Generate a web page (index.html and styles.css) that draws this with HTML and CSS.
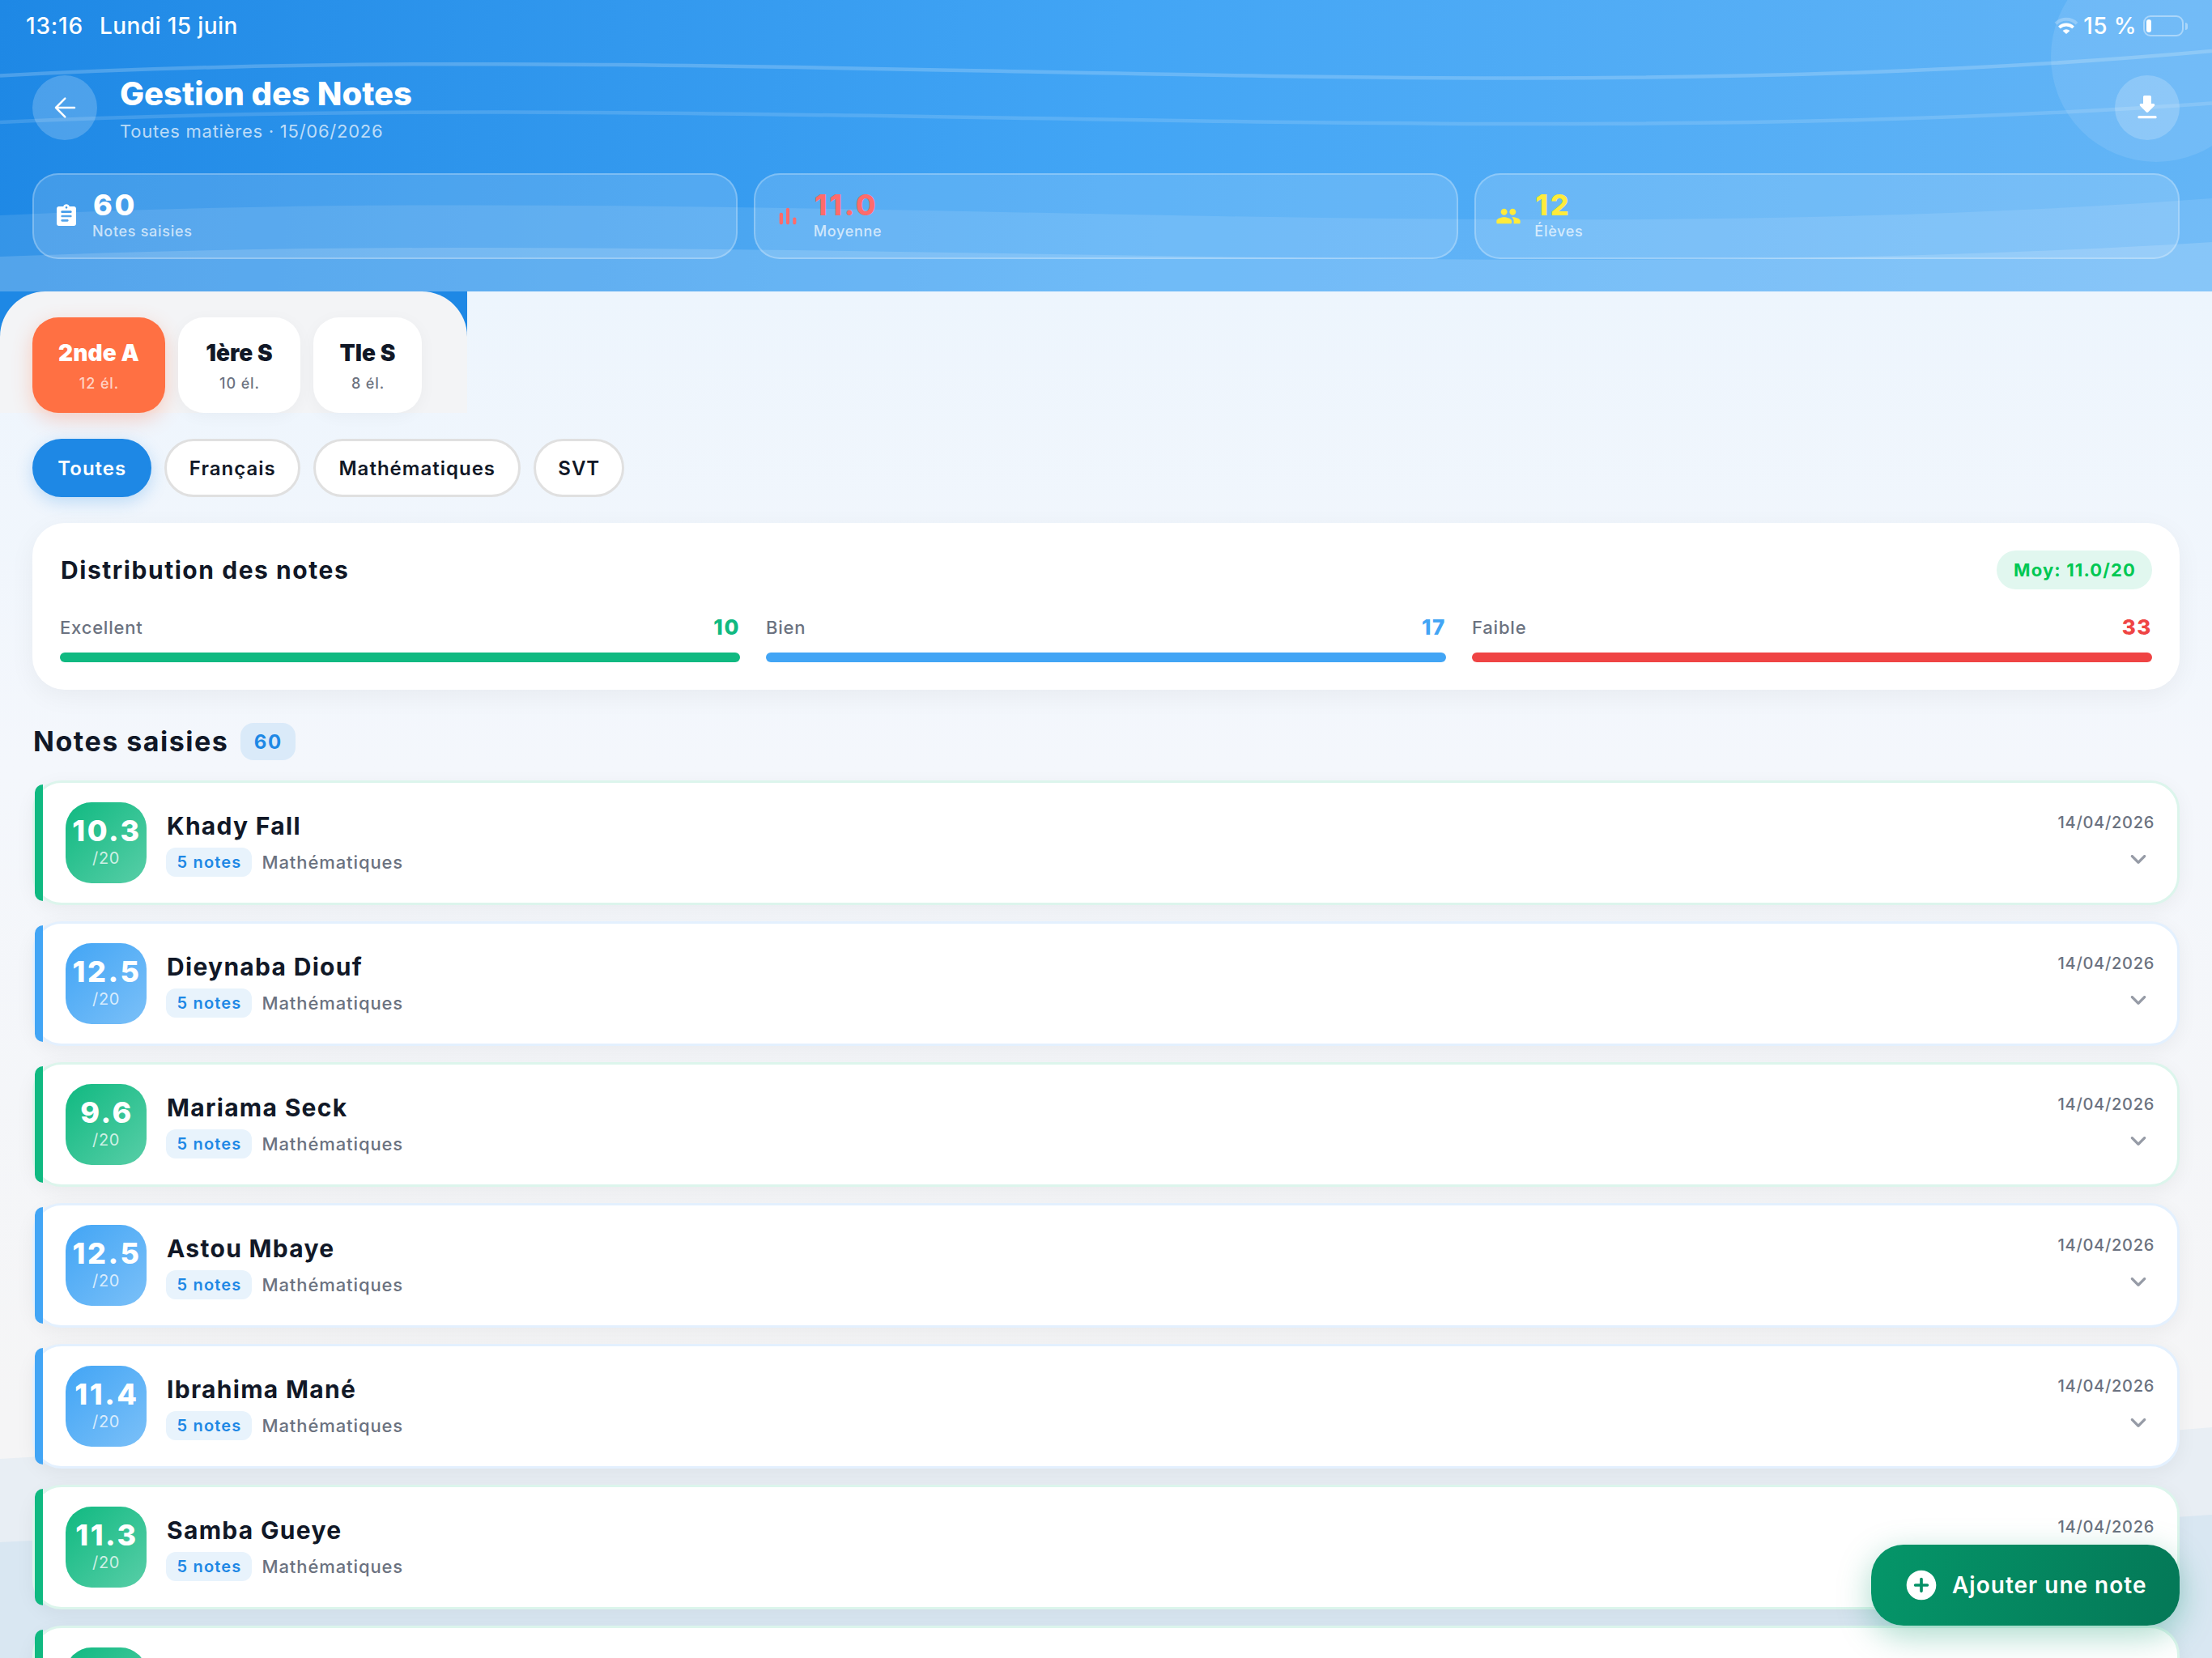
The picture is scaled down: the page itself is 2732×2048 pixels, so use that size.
FILE: index.html
```html
<!DOCTYPE html>
<html lang="fr">
<head>
    <meta charset="UTF-8">
    <meta name="viewport" content="width=device-width, initial-scale=1.0">
    <title>Gestion des Notes</title>
    <link rel="stylesheet" href="styles.css">
</head>
<body>
    <svg class="page-waves" viewBox="0 0 2732 2048">
        <path d="M0 1802 C910 1745 1822 1840 2732 1763 V2048 H0 Z" fill="#1e88e5" fill-opacity="0.06"/>
        <path d="M0 1905 C910 1855 1822 1935 2732 1871 V2048 H0 Z" fill="#1e88e5" fill-opacity="0.07"/>
    </svg>

    <header class="header">
        <svg class="header-waves" viewBox="0 0 2732 360">
            <path d="M0 266 C910 222 1822 313 2732 245 V360 H0 Z" fill="#fff" fill-opacity="0.1"/>
            <path d="M0 317 C910 279 1822 356 2732 299 V360 H0 Z" fill="#fff" fill-opacity="0.15"/>
            <path d="M0 93.5 C910 44 1822 145 2732 63" fill="none" stroke="#fff" stroke-opacity="0.2" stroke-width="4.5"/>
            <path d="M0 151 C910 109 1822 192 2732 127.5" fill="none" stroke="#fff" stroke-opacity="0.14" stroke-width="4.5"/>
            <circle cx="2663" cy="70" r="130" fill="#fff" fill-opacity="0.1"/>
        </svg>

        <div class="status-bar">
            <div class="status-left">
                <span class="time">13:16</span>
                <span>Lundi 15 juin</span>
            </div>
            <div class="status-right">
                <svg class="wifi" viewBox="0 0 30 22" fill="none">
                    <path d="M2 8.2 A18.5 18.5 0 0 1 28 8.2" stroke="#fff" stroke-opacity="0.25" stroke-width="4"/>
                    <path d="M6.4 13 A12.3 12.3 0 0 1 23.6 13" stroke="#fff" stroke-width="3.8"/>
                    <path d="M15 21 L10.6 17 A6.2 6.2 0 0 1 19.4 17 Z" fill="#fff"/>
                </svg>
                <span class="percent">15 %</span>
                <div class="battery"><div class="battery-level"></div></div>
                <div class="battery-cap"></div>
            </div>
        </div>

        <div class="title-row">
            <div class="round-btn">
                <svg class="icon-40" viewBox="0 0 40 40" fill="none" stroke="#fff" stroke-width="2.5" stroke-linecap="round" stroke-linejoin="round"><path d="M32 20 H9 M20.3 8.6 L9 20 L20.3 31.4"/></svg>
            </div>
            <div class="title-text">
                <h1>Gestion des Notes</h1>
                <p>Toutes matières · 15/06/2026</p>
            </div>
            <div class="round-btn">
                <svg class="icon-40" viewBox="0 0 24 24" fill="#fff"><path d="M16.59 9H15V4c0-.55-.45-1-1-1h-4c-.55 0-1 .45-1 1v5H7.41c-.89 0-1.34 1.08-.71 1.71l4.59 4.59c.39.39 1.02.39 1.41 0l4.59-4.59c.63-.63.19-1.71-.7-1.71zM5 19c0 .55.45 1 1 1h12c.55 0 1-.45 1-1s-.45-1-1-1H6c-.55 0-1 .45-1 1z"/></svg>
            </div>
        </div>

        <div class="stats">
            <div class="stat">
                <svg class="icon-32" viewBox="0 0 24 24" fill="#fff"><path d="M19 3h-4.18C14.4 1.84 13.3 1 12 1s-2.4.84-2.82 2H5c-1.1 0-2 .9-2 2v14c0 1.1.9 2 2 2h14c1.1 0 2-.9 2-2V5c0-1.1-.9-2-2-2zm-7 0c.55 0 1 .45 1 1s-.45 1-1 1-1-.45-1-1 .45-1 1-1zm1 14H8c-.55 0-1-.45-1-1s.45-1 1-1h5c.55 0 1 .45 1 1s-.45 1-1 1zm3-4H8c-.55 0-1-.45-1-1s.45-1 1-1h8c.55 0 1 .45 1 1s-.45 1-1 1zm0-4H8c-.55 0-1-.45-1-1s.45-1 1-1h8c.55 0 1 .45 1 1s-.45 1-1 1z"/></svg>
                <div>
                    <div class="stat-value">60</div>
                    <div class="stat-label">Notes saisies</div>
                </div>
            </div>
            <div class="stat stat-red">
                <svg class="icon-32" viewBox="1.2 1.2 21.6 21.6" fill="#ff6b6b"><path d="M6.4 9.2h.2c.77 0 1.4.63 1.4 1.4v7c0 .77-.63 1.4-1.4 1.4h-.2c-.77 0-1.4-.63-1.4-1.4v-7c0-.77.63-1.4 1.4-1.4zM12 5c.77 0 1.4.63 1.4 1.4v11.2c0 .77-.63 1.4-1.4 1.4-.77 0-1.4-.63-1.4-1.4V6.4c0-.77.63-1.4 1.4-1.4zm5.6 8c.77 0 1.4.63 1.4 1.4v3.2c0 .77-.63 1.4-1.4 1.4-.77 0-1.4-.63-1.4-1.4v-3.2c0-.77.63-1.4 1.4-1.4z"/></svg>
                <div>
                    <div class="stat-value">11.0</div>
                    <div class="stat-label">Moyenne</div>
                </div>
            </div>
            <div class="stat stat-yellow">
                <svg class="icon-32" viewBox="0 0 24 24" fill="#ffeb3b"><path d="M16 11c1.66 0 2.99-1.34 2.99-3S17.66 5 16 5c-1.66 0-3 1.34-3 3s1.34 3 3 3zm-8 0c1.66 0 2.99-1.34 2.99-3S9.66 5 8 5C6.34 5 5 6.34 5 8s1.34 3 3 3zm0 2c-2.33 0-7 1.17-7 3.5V18c0 .55.45 1 1 1h12c.55 0 1-.45 1-1v-1.5c0-2.33-4.67-3.5-7-3.5zm8 0c-.29 0-.62.02-.97.05.02.01.03.03.04.04 1.14.83 1.93 1.94 1.93 3.41V18c0 .35-.07.69-.18 1H22c.55 0 1-.45 1-1v-1.5c0-2.33-4.67-3.5-7-3.5z"/></svg>
                <div>
                    <div class="stat-value">12</div>
                    <div class="stat-label">Élèves</div>
                </div>
            </div>
        </div>
    </header>

    <div class="classes-wrap">
        <div class="classes">
            <div class="class-tile active"><b>2nde A</b><span>12 él.</span></div>
            <div class="class-tile"><b>1ère S</b><span>10 él.</span></div>
            <div class="class-tile"><b>Tle S</b><span>8 él.</span></div>
        </div>
    </div>

    <main>
        <div class="subjects">
            <div class="subject active">Toutes</div>
            <div class="subject">Français</div>
            <div class="subject">Mathématiques</div>
            <div class="subject">SVT</div>
        </div>

        <section class="distribution">
            <div class="distribution-head">
                <h2>Distribution des notes</h2>
                <span class="average">Moy: 11.0/20</span>
            </div>
            <div class="levels">
                <div class="level excellent">
                    <div class="level-text"><span>Excellent</span><b>10</b></div>
                    <div class="bar"></div>
                </div>
                <div class="level good">
                    <div class="level-text"><span>Bien</span><b>17</b></div>
                    <div class="bar"></div>
                </div>
                <div class="level weak">
                    <div class="level-text"><span>Faible</span><b>33</b></div>
                    <div class="bar"></div>
                </div>
            </div>
        </section>

        <div class="list-head">
            <h2>Notes saisies</h2>
            <span class="count">60</span>
        </div>

        <div class="list" id="list"></div>
    </main>

    <div class="add-btn">
        <svg class="icon-44" viewBox="0 0 24 24" fill="#fff"><path d="M12 2C6.48 2 2 6.48 2 12s4.48 10 10 10 10-4.48 10-10S17.52 2 12 2zm4 11h-3v3c0 .55-.45 1-1 1s-1-.45-1-1v-3H8c-.55 0-1-.45-1-1s.45-1 1-1h3V8c0-.55.45-1 1-1s1 .45 1 1v3h3c.55 0 1 .45 1 1s-.45 1-1 1z"/></svg>
        <span>Ajouter une note</span>
    </div>

    <script>
        const students = [
            { name: 'Khady Fall', score: '10.3', color: 'green' },
            { name: 'Dieynaba Diouf', score: '12.5', color: 'blue' },
            { name: 'Mariama Seck', score: '9.6', color: 'green' },
            { name: 'Astou Mbaye', score: '12.5', color: 'blue' },
            { name: 'Ibrahima Mané', score: '11.4', color: 'blue' },
            { name: 'Samba Gueye', score: '11.3', color: 'green' }
        ];

        const list = document.getElementById('list');
        students.forEach(function(s) {
            list.innerHTML += `
                <div class="card ${s.color}">
                    <div class="score"><b>${s.score}</b><span>/20</span></div>
                    <div class="info">
                        <div class="name">${s.name}</div>
                        <div class="meta"><span class="notes">5 notes</span><span>Mathématiques</span></div>
                    </div>
                    <div class="right">
                        <span class="date">14/04/2026</span>
                        <svg class="icon-40" viewBox="0 0 24 24" fill="#969ba6"><path d="M15.88 9.29L12 13.17 8.12 9.29c-.39-.39-1.02-.39-1.41 0-.39.39-.39 1.02 0 1.41l4.59 4.59c.39.39 1.02.39 1.41 0l4.59-4.59c.39-.39.39-1.02 0-1.41-.39-.38-1.03-.39-1.42 0z"/></svg>
                    </div>
                </div>`;
        });
        // next card, only its top edge is on screen
        list.innerHTML += '<div class="card green"><div class="score"></div></div>';
    </script>
</body>
</html>
```
FILE: styles.css
```css
* {
    box-sizing: border-box;
    margin: 0;
    padding: 0;
}
body {
    font-family: Inter, "Liberation Sans", sans-serif;
    position: relative;
    width: 2732px;
    height: 2048px;
    overflow: hidden;
    color: #111827;
    background: linear-gradient(180deg, #edf5fd 360px, #f4f7fc 950px, #f5f5f6 1750px);
}
svg {
    display: block;
    flex-shrink: 0;
}
.page-waves {
    position: absolute;
    top: 0;
    left: 0;
    width: 2732px;
    height: 2048px;
    z-index: -1;
}
.icon-32 {
    width: 32px;
    height: 32px;
}
.icon-40 {
    width: 40px;
    height: 40px;
}
.icon-44 {
    width: 44px;
    height: 44px;
}

/* header */
.header {
    position: relative;
    z-index: 0;
    height: 360px;
    padding: 0 40px;
    color: white;
    background: linear-gradient(97.5deg, #1e88e5, #42a5f5 50%, #64b5f6);
    overflow: hidden;
}
.header-waves {
    position: absolute;
    top: 0;
    left: 0;
    width: 2732px;
    height: 360px;
    z-index: -1;
}
.status-bar {
    display: flex;
    justify-content: space-between;
    align-items: center;
    height: 64px;
    margin: 0 -10px 0 -8px;
    font-size: 28px;
    font-weight: 450;
    letter-spacing: 0.4px;
}
.status-left, .status-right {
    display: flex;
    align-items: center;
}
.time {
    width: 91px;
    letter-spacing: 0.8px;
}
.wifi {
    width: 30px;
    height: 22px;
}
.percent {
    margin: 0 8px 0 6px;
    letter-spacing: 0.4px;
}
.battery {
    width: 50px;
    height: 26px;
    padding: 3px 2px;
    border: 2px solid rgba(255, 255, 255, 0.4);
    border-radius: 9px;
}
.battery-level {
    width: 6px;
    height: 16px;
    border-radius: 3px;
    background: white;
}
.battery-cap {
    width: 3px;
    height: 9px;
    margin-left: 2px;
    border-radius: 0 3px 3px 0;
    background: rgba(255, 255, 255, 0.4);
}
.title-row {
    display: flex;
    align-items: center;
    height: 80px;
    margin-top: 29px;
}
.round-btn {
    display: flex;
    justify-content: center;
    align-items: center;
    width: 80px;
    height: 80px;
    border-radius: 50%;
    background: rgba(255, 255, 255, 0.2);
}
.title-text {
    flex: 1;
    padding: 1px 0 0 28px;
}
.title-text h1 {
    font-size: 40px;
    line-height: 46px;
    font-weight: 800;
}
.title-text p {
    margin-top: 10px;
    font-size: 22px;
    line-height: 26px;
    letter-spacing: 0.75px;
    color: rgba(255, 255, 255, 0.7);
}
.stats {
    display: flex;
    gap: 20px;
    margin-top: 41px;
}
.stat {
    flex: 1;
    display: flex;
    align-items: center;
    gap: 16px;
    height: 106px;
    padding: 0 24px;
    border: 2px solid rgba(255, 255, 255, 0.25);
    border-radius: 32px;
    background: rgba(255, 255, 255, 0.15);
}
.stat-value {
    padding-left: 1px;
    font-size: 36px;
    line-height: 36px;
    font-weight: 800;
    letter-spacing: 2.6px;
}
.stat-label {
    margin: 4px 0 3px;
    font-size: 18px;
    line-height: 22px;
    font-weight: 500;
    letter-spacing: 0.7px;
    color: rgba(255, 255, 255, 0.7);
}
.stat-red .stat-value {
    color: #ff6b6b;
}
.stat-yellow .stat-value {
    color: #ffeb3b;
}

/* classes */
.classes-wrap {
    width: 577px;
    background: #1e88e5;
}
.classes {
    display: flex;
    gap: 16px;
    padding: 32px 40px 0;
    border-radius: 56px 56px 0 0;
    background: #f3f4f6;
}
.class-tile {
    display: flex;
    flex-direction: column;
    align-items: center;
    gap: 9px;
    width: 151px;
    height: 118px;
    padding-top: 27px;
    border-radius: 32px;
    background: white;
    box-shadow: 0 4px 20px rgba(0, 0, 0, 0.04);
}
.class-tile:last-child {
    width: 134px;
}
.class-tile b {
    font-size: 28px;
    line-height: 34px;
    font-weight: 900;
    letter-spacing: 0.1px;
}
.class-tile span {
    font-size: 18px;
    line-height: 24px;
    font-weight: 500;
    letter-spacing: 0.9px;
    margin-right: -1px;
    color: #6b7280;
}
.class-tile.active {
    width: 164px;
    color: white;
    background: #ff7043;
    box-shadow: 0 8px 24px rgba(255, 112, 67, 0.3);
}
.class-tile.active span {
    color: rgba(255, 255, 255, 0.7);
}

/* content */
main {
    padding: 32px 40px 0;
}
.subjects {
    display: flex;
    gap: 16px;
}
.subject {
    width: 168.5px;
    height: 72px;
    padding: 1px 0 0 1px;
    border: 3px solid #e0e0e0;
    border-radius: 40px;
    background: white;
    font-size: 24px;
    line-height: 66px;
    font-weight: 600;
    letter-spacing: 1px;
    text-align: center;
}
.subject:nth-child(3) {
    width: 255.5px;
}
.subject:nth-child(4) {
    width: 112.5px;
}
.subject.active {
    width: 146.5px;
    color: white;
    background: #1e88e5;
    border-color: #1e88e5;
    box-shadow: 0 6px 20px rgba(30, 136, 229, 0.25);
}
.distribution {
    height: 206px;
    margin-top: 32px;
    padding: 34px;
    border-radius: 40px;
    background: white;
    box-shadow: 0 8px 32px rgba(0, 0, 0, 0.05);
}
.distribution-head {
    display: flex;
    justify-content: space-between;
    align-items: center;
    height: 48px;
}
.distribution-head h2 {
    padding-left: 1px;
    font-size: 30px;
    font-weight: 700;
    letter-spacing: 1.55px;
}
.average {
    height: 48px;
    padding: 0 20px 0 21px;
    border-radius: 24px;
    background: #e1f7ef;
    color: #00c853;
    font-size: 22px;
    line-height: 48px;
    font-weight: 700;
    letter-spacing: 1.15px;
}
.levels {
    display: flex;
    gap: 32px;
    margin-top: 32px;
}
.level {
    flex: 1;
}
.level-text {
    display: flex;
    justify-content: space-between;
    height: 30px;
    line-height: 30px;
    font-size: 22px;
    font-weight: 500;
    letter-spacing: 0.8px;
    color: #6b7280;
}
.level-text b {
    font-size: 26px;
    font-weight: 800;
    letter-spacing: 1.6px;
}
.bar {
    height: 12px;
    margin-top: 16px;
    border-radius: 6px;
}
.excellent b {
    color: #10b981;
}
.excellent .bar {
    background: #10b981;
}
.good b {
    color: #42a5f5;
}
.good .bar {
    background: #42a5f5;
}
.weak b {
    color: #ef4444;
}
.weak .bar {
    background: #ef4444;
}
.list-head {
    display: flex;
    align-items: center;
    height: 46px;
    margin-top: 41px;
}
.list-head h2 {
    padding: 0 0 1px 1px;
    font-size: 34px;
    font-weight: 700;
    letter-spacing: 1.5px;
}
.count {
    width: 68px;
    height: 46px;
    margin-left: 15px;
    border-radius: 16px;
    background: #daeaf9;
    color: #1e88e5;
    font-size: 24px;
    line-height: 47px;
    font-weight: 700;
    letter-spacing: 1.6px;
    text-align: center;
}

/* students */
.list {
    display: flex;
    flex-direction: column;
    gap: 20px;
    margin-top: 25px;
}
.card {
    position: relative;
    display: flex;
    align-items: center;
    height: 154px;
    flex-shrink: 0;
    padding: 0 28px 0 38px;
    border: 3px solid #dcf5ec;
    border-radius: 36px;
    background: white;
    box-shadow: 0 6px 24px rgba(0, 0, 0, 0.05);
}
.card::before {
    content: "";
    position: absolute;
    left: 0;
    top: 2px;
    width: 10px;
    height: 144px;
    border-radius: 10px 0 0 10px;
    background: #10b981;
}
.card.blue {
    border-color: #e3f0fe;
}
.card.blue::before {
    background: #42a5f5;
}
.score {
    display: flex;
    flex-direction: column;
    align-items: center;
    width: 100px;
    height: 100px;
    padding-top: 17px;
    border-radius: 32px;
    color: white;
    background: linear-gradient(135deg, #10b981, #58cea7);
}
.blue .score {
    background: linear-gradient(135deg, #42a5f5, #7bc0f8);
}
.score b {
    font-size: 36px;
    line-height: 36px;
    font-weight: 800;
    letter-spacing: 2.5px;
    margin-right: -2px;
}
.score span {
    margin-top: 4px;
    font-size: 20px;
    line-height: 24px;
    letter-spacing: 0.6px;
    color: rgba(255, 255, 255, 0.75);
}
.info {
    flex: 1;
    padding: 2px 0 0 24px;
}
.name {
    padding-left: 1px;
    font-size: 30px;
    line-height: 38px;
    font-weight: 700;
    letter-spacing: 1.3px;
}
.meta {
    display: flex;
    gap: 12.5px;
    margin-top: 8px;
    font-size: 22px;
    line-height: 37px;
    font-weight: 500;
    letter-spacing: 0.9px;
    color: #6b7280;
}
.notes {
    width: 106px;
    height: 36px;
    padding-left: 1px;
    border-radius: 12px;
    background: #e8f3fc;
    color: #1e88e5;
    font-size: 20px;
    font-weight: 600;
    letter-spacing: 1.2px;
    text-align: center;
}
.right {
    display: flex;
    flex-direction: column;
    align-items: flex-end;
    gap: 12px;
    padding-top: 1px;
}
.date {
    font-size: 20px;
    line-height: 26px;
    font-weight: 500;
    letter-spacing: 0.7px;
    color: #6b7280;
}

/* floating button */
.add-btn {
    position: absolute;
    right: 40px;
    top: 1908px;
    display: flex;
    align-items: center;
    gap: 16px;
    width: 381px;
    height: 100px;
    padding-left: 40px;
    border-radius: 40px;
    color: white;
    background: linear-gradient(105deg, #059669, #047857);
    box-shadow: 0 12px 40px rgba(5, 150, 105, 0.35);
    font-size: 28px;
    font-weight: 600;
    letter-spacing: 1px;
    white-space: nowrap;
}
```
